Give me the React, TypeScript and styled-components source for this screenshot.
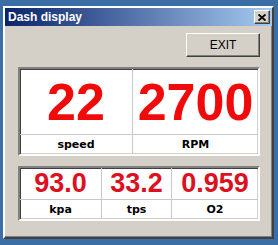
import React from 'react';
import styled, { createGlobalStyle } from 'styled-components';

const GlobalStyle = createGlobalStyle`
  html, body {
    margin: 0;
    padding: 0;
    background: #3a6ea5;
  }
  body {
    padding: 6px 3px 0 3px;
    font-family: "Liberation Sans", Arial, sans-serif;
  }
`;

const Window = styled.div`
  width: 267px;
  height: 229px;
  background: #d4d0c8;
  border: 2px solid;
  border-color: #ffffff #404040 #404040 #ffffff;
  box-shadow: inset -1px -1px 0 #808080, inset 1px 1px 0 #d4d0c8;
  display: flex;
  flex-direction: column;
`;

const TitleBar = styled.div`
  height: 18px;
  padding: 0 2px;
  display: flex;
  align-items: center;
  justify-content: space-between;
  background: linear-gradient(to right, #0a246a, #a6caf0);
`;

const Title = styled.span`
  color: #fff;
  font-weight: bold;
  font-size: 12px;
  padding-left: 1px;
`;

const CloseButton = styled.div`
  width: 14px;
  height: 12px;
  background: #d4d0c8;
  border: 1px solid;
  border-color: #ffffff #404040 #404040 #ffffff;
  box-shadow: inset -1px -1px 0 #808080;
  display: flex;
  align-items: center;
  justify-content: center;
`;

const Content = styled.div`
  flex: 1;
  padding: 7px 12px 0 13px;
  display: flex;
  flex-direction: column;
`;

const ButtonRow = styled.div`
  display: flex;
  justify-content: flex-end;
`;

const ExitButton = styled.button`
  width: 74px;
  height: 24px;
  padding: 0;
  background: #d4d0c8;
  border: 1px solid;
  border-color: #ffffff #404040 #404040 #ffffff;
  box-shadow: inset -1px -1px 0 #808080;
  font-family: "Liberation Sans", Arial, sans-serif;
  font-size: 12px;
  color: #000;
`;

const Panel = styled.div<{ $cols: string; $valueHeight: number }>`
  margin-top: 10px;
  display: grid;
  grid-template-columns: ${(p) => p.$cols};
  grid-template-rows: ${(p) => p.$valueHeight}px 19px;
  background: #fff;
  border: 2px solid;
  border-color: #808080 #ffffff #ffffff #808080;
  box-shadow: inset 1px 1px 0 #404040, inset -1px -1px 0 #d4d0c8;
`;

const Value = styled.div<{ $size: number; $color: string; $last?: boolean }>`
  display: flex;
  align-items: center;
  justify-content: center;
  color: ${(p) => p.$color};
  font-weight: bold;
  font-size: ${(p) => p.$size}px;
  line-height: 1;
  border-right: ${(p) => (p.$last ? 'none' : '1px solid #c8c8c8')};
  border-bottom: 1px solid #c8c8c8;
`;

const Label = styled.div<{ $last?: boolean }>`
  display: flex;
  align-items: center;
  justify-content: center;
  font-family: "DejaVu Sans", Verdana, sans-serif;
  font-weight: bold;
  font-size: 11px;
  color: #000;
  border-right: ${(p) => (p.$last ? 'none' : '1px solid #c8c8c8')};
`;

const big = [
  { value: '22', label: 'speed' },
  { value: '2700', label: 'RPM' },
];

const small = [
  { value: '93.0', label: 'kpa' },
  { value: '33.2', label: 'tps' },
  { value: '0.959', label: 'O2' },
];

export default function App() {
  return (
    <>
      <GlobalStyle />
      <Window>
        <TitleBar>
          <Title>Dash display</Title>
          <CloseButton>
            <svg width="8" height="7" viewBox="0 0 8 7">
              <path d="M0.5 0.5 L7.5 6.5 M7.5 0.5 L0.5 6.5" stroke="#000" strokeWidth="1.8" />
            </svg>
          </CloseButton>
        </TitleBar>
        <Content>
          <ButtonRow>
            <ExitButton>EXIT</ExitButton>
          </ButtonRow>
          <Panel $cols="113px 1fr" $valueHeight={66}>
            {big.map((m, i) => (
              <Value key={m.label} $size={52} $color="#f00a0a" $last={i === big.length - 1}>
                {m.value}
              </Value>
            ))}
            {big.map((m, i) => (
              <Label key={m.label} $last={i === big.length - 1}>
                {m.label}
              </Label>
            ))}
          </Panel>
          <Panel $cols="82px 70px 1fr" $valueHeight={32}>
            {small.map((m, i) => (
              <Value key={m.label} $size={27} $color="#dc1020" $last={i === small.length - 1}>
                {m.value}
              </Value>
            ))}
            {small.map((m, i) => (
              <Label key={m.label} $last={i === small.length - 1}>
                {m.label}
              </Label>
            ))}
          </Panel>
        </Content>
      </Window>
    </>
  );
}
